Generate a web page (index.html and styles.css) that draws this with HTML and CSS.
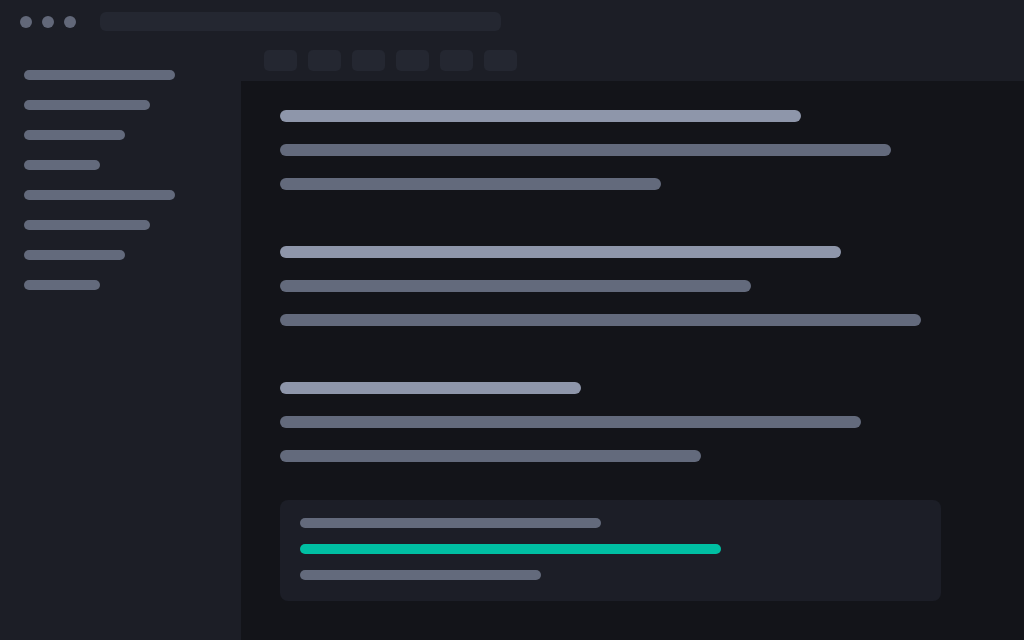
FILE: index.html
```html
<!DOCTYPE html>
<html>
<head>
<meta charset="utf-8">
<link rel="stylesheet" href="styles.css">
</head>
<body>
<div class="app">
  <div class="topbar">
    <div class="dots"><span class="dot"></span><span class="dot"></span><span class="dot"></span></div>
    <div class="address"></div>
  </div>
  <div class="body">
    <aside class="sidebar">
      <div class="nav w150"></div>
      <div class="nav w125"></div>
      <div class="nav w100"></div>
      <div class="nav w75"></div>
      <div class="nav w150"></div>
      <div class="nav w125"></div>
      <div class="nav w100"></div>
      <div class="nav w75"></div>
    </aside>
    <section class="right">
      <div class="tabs">
        <span class="tab"></span><span class="tab"></span><span class="tab"></span>
        <span class="tab"></span><span class="tab"></span><span class="tab"></span>
      </div>
      <main class="main">
        <div class="group">
          <div class="line head" style="width:521px"></div>
          <div class="line" style="width:611px"></div>
          <div class="line" style="width:381px"></div>
        </div>
        <div class="group">
          <div class="line head" style="width:561px"></div>
          <div class="line" style="width:471px"></div>
          <div class="line" style="width:641px"></div>
        </div>
        <div class="group">
          <div class="line head" style="width:301px"></div>
          <div class="line" style="width:581px"></div>
          <div class="line" style="width:421px"></div>
        </div>
        <div class="card">
          <div class="cline" style="width:301px"></div>
          <div class="cline accent" style="width:421px"></div>
          <div class="cline" style="width:241px"></div>
        </div>
      </main>
    </section>
  </div>
</div>
</body>
</html>
```
FILE: styles.css
```css
* { box-sizing: border-box; }
html, body { margin: 0; padding: 0; }
body {
  width: 1024px;
  height: 640px;
  overflow: hidden;
  background: #1c1e26;
  font-family: "Liberation Sans", Arial, sans-serif;
}
.app { display: flex; flex-direction: column; height: 640px; }
.topbar {
  height: 40px;
  padding: 12px 0 0 20px;
  display: flex;
  align-items: flex-start;
}
.dots {
  display: flex;
  gap: 10px;
  height: 19px;
  align-items: center;
}
.dot {
  width: 12px; height: 12px;
  border-radius: 50%;
  background: #626879;
}
.address {
  margin-left: 24px;
  width: 401px;
  height: 19px;
  border-radius: 6px;
  background: #242731;
}
.body {
  flex: 1;
  display: grid;
  grid-template-columns: 241px 1fr;
  min-height: 0;
}
.sidebar {
  padding: 30px 0 0 24px;
  display: flex;
  flex-direction: column;
  gap: 20px;
}
.nav {
  height: 10px;
  border-radius: 5px;
  background: #636a7c;
}
.w150 { width: 151px; }
.w125 { width: 126px; }
.w100 { width: 101px; }
.w75 { width: 76px; }
.right { display: flex; flex-direction: column; min-height: 0; }
.tabs {
  height: 41px;
  padding: 10px 0 0 23px;
  display: flex;
  gap: 11px;
  align-items: flex-start;
}
.tab {
  width: 33px;
  height: 21px;
  border-radius: 5px;
  background: #242731;
}
.main {
  flex: 1;
  background: #131419;
  padding: 29px 0 0 39px;
  display: flex;
  flex-direction: column;
}
.group {
  display: flex;
  flex-direction: column;
  gap: 22px;
  margin-bottom: 56px;
}
.group:nth-child(3) { margin-bottom: 38px; }
.line {
  height: 12px;
  border-radius: 6px;
  background: #636a7c;
}
.line.head { background: #8e96aa; }
.card {
  width: 661px;
  height: 101px;
  border-radius: 8px;
  background: #1c1e27;
  padding: 18px 20px 0 20px;
  display: flex;
  flex-direction: column;
  gap: 16px;
}
.cline {
  height: 10px;
  border-radius: 5px;
  background: #636a7c;
}
.cline.accent { background: #00bfa3; }
```
